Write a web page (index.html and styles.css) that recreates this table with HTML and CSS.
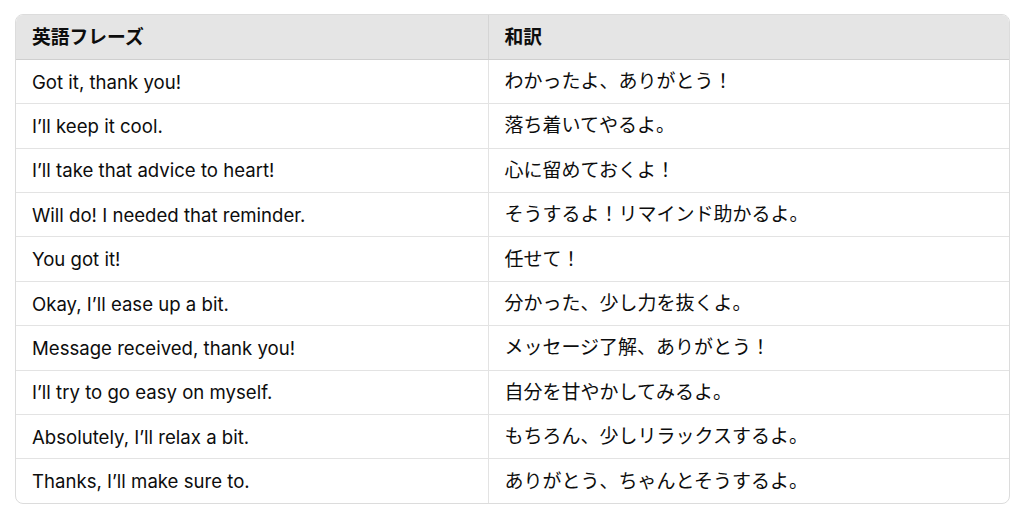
FILE: index.html
```html
<!DOCTYPE html>
<html lang="ja">
<head>
<meta charset="utf-8">
<link rel="stylesheet" href="styles.css">
</head>
<body>
<div class="wrap">
<table class="tbl">
<thead>
<tr><th class="c1">英語フレーズ</th><th>和訳</th></tr>
</thead>
<tbody>
<tr><td class="c1">Got it, thank you!</td><td>わかったよ、ありがとう！</td></tr>
<tr><td class="c1">I’ll keep it cool.</td><td>落ち着いてやるよ。</td></tr>
<tr><td class="c1">I’ll take that advice to heart!</td><td>心に留めておくよ！</td></tr>
<tr><td class="c1">Will do! I needed that reminder.</td><td>そうするよ！リマインド助かるよ。</td></tr>
<tr><td class="c1">You got it!</td><td>任せて！</td></tr>
<tr><td class="c1">Okay, I’ll ease up a bit.</td><td>分かった、少し力を抜くよ。</td></tr>
<tr><td class="c1">Message received, thank you!</td><td>メッセージ了解、ありがとう！</td></tr>
<tr><td class="c1">I’ll try to go easy on myself.</td><td>自分を甘やかしてみるよ。</td></tr>
<tr><td class="c1">Absolutely, I’ll relax a bit.</td><td>もちろん、少しリラックスするよ。</td></tr>
<tr><td class="c1">Thanks, I’ll make sure to.</td><td>ありがとう、ちゃんとそうするよ。</td></tr>
</tbody>
</table>
</div>
</body>
</html>
```

FILE: styles.css
```css
html, body {
  margin: 0;
  padding: 0;
  background: #ffffff;
}
body {
  padding: 14px 15px 0 15px;
  font-family: "Inter", "Noto Sans CJK JP", sans-serif;
  color: #0d0d0d;
}
.wrap {
  width: 995px;
  border: 1px solid #dcdcdc;
  border-radius: 8px;
  overflow: hidden;
  box-sizing: border-box;
}
.tbl {
  width: 100%;
  border-collapse: collapse;
  table-layout: fixed;
  font-size: 18.6px;
}
.tbl th, .tbl td {
  text-align: left;
  padding: 0 16px;
  height: 44.4px;
  box-sizing: border-box;
  border-bottom: 1px solid #e3e3e3;
  white-space: nowrap;
}
.tbl th {
  background: #e5e5e5;
  font-weight: 700;
  font-size: 18.8px;
  padding-bottom: 2px;
  border-bottom: 1px solid #cfcfcf;
  font-family: "Noto Sans CJK JP", sans-serif;
}
.tbl tbody tr:last-child td {
  border-bottom: none;
}
.tbl .c1 {
  width: 472px;
  border-right: 1px solid #e3e3e3;
}
.tbl th.c1 {
  border-right: 1px solid #d5d5d5;
}
.tbl td:not(.c1) {
  font-family: "Noto Sans CJK JP", sans-serif;
  font-size: 19px;
  padding-bottom: 4px;
}
```
